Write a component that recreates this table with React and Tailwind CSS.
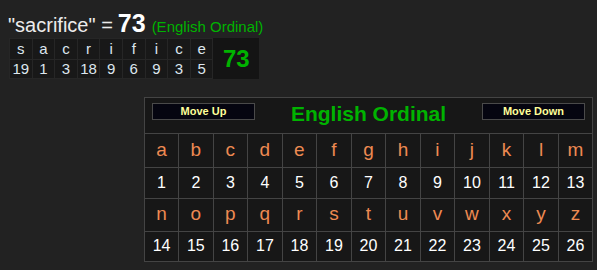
import React from 'react';

const word = 'sacrifice';
const alphabet = 'abcdefghijklmnopqrstuvwxyz'.split('');

function value(ch) {
  return ch.charCodeAt(0) - 96;
}

function App() {
  const letters = word.split('');
  const total = letters.reduce((sum, ch) => sum + value(ch), 0);
  const rows = [alphabet.slice(0, 13), alphabet.slice(13)];

  return (
    <div className="w-[597px] h-[270px] bg-[#222222] text-white overflow-hidden font-['Liberation_Sans',Arial,sans-serif]">
      {/* Heading */}
      <div className="pl-[8px] pt-[5px] h-[31px] flex items-baseline">
        <span className="text-[20px] text-[#ececec]">"{word}" = </span>
        <span className="text-[25px] font-bold ml-[5px]">{total}</span>
        <span className="text-[15px] text-[#00b300] ml-[6px]">(English Ordinal)</span>
      </div>

      {/* Letter breakdown */}
      <div className="ml-[9px] mt-[7px] flex w-max bg-[#181818]">
        <table className="border-collapse">
          <tbody>
            <tr>
              {letters.map((ch, i) => (
                <td key={i} className="w-[22.6px] h-[20px] p-0 text-center text-[15px] leading-[20px] text-[#dde6ee] border border-[#262626]">{ch}</td>
              ))}
            </tr>
            <tr>
              {letters.map((ch, i) => (
                <td key={i} className="w-[22.6px] h-[18px] p-0 text-center text-[15px] leading-[18px] text-[#dde6ee] border border-[#262626]">{value(ch)}</td>
              ))}
            </tr>
          </tbody>
        </table>
        <div className="w-[46px] flex items-center justify-center text-[24px] font-bold text-[#00b300] bg-[#141414]">{total}</div>
      </div>

      {/* Cipher chart */}
      <div className="ml-[144px] mt-[18px] w-[449px] bg-[#171717] border border-[#444444]">
        <div className="h-[36px] flex items-start justify-between px-[7px] pt-[5px] border-b border-[#444444]">
          <button className="w-[103px] h-[17px] bg-[#050510] border border-[#4a4a4a] text-[#ffff99] text-[11px] font-bold leading-[15px]">Move Up</button>
          <span className="text-[21px] leading-[24px] font-bold text-[#00b300] -mt-[1px]">English Ordinal</span>
          <button className="w-[103px] h-[17px] bg-[#050510] border border-[#4a4a4a] text-[#ffff99] text-[11px] font-bold leading-[15px]">Move Down</button>
        </div>
        <table className="border-collapse w-full">
          <tbody>
            {rows.map((row, r) => (
              <React.Fragment key={r}>
                <tr>
                  {row.map((ch, i) => (
                    <td key={ch} className={`h-[33px] p-0 text-center text-[19px] text-[#ee8a52] border-[#444444] border-b ${i < 12 ? 'border-r' : ''}`}>{ch}</td>
                  ))}
                </tr>
                <tr>
                  {row.map((ch, i) => (
                    <td key={ch} className={`${r === 0 ? 'h-[31px]' : 'h-[30px]'} p-0 text-center text-[16px] text-white border-[#444444] ${r === 0 ? 'border-b' : ''} ${i < 12 ? 'border-r' : ''}`}>{value(ch)}</td>
                  ))}
                </tr>
              </React.Fragment>
            ))}
          </tbody>
        </table>
      </div>
    </div>
  );
}

export default App;
